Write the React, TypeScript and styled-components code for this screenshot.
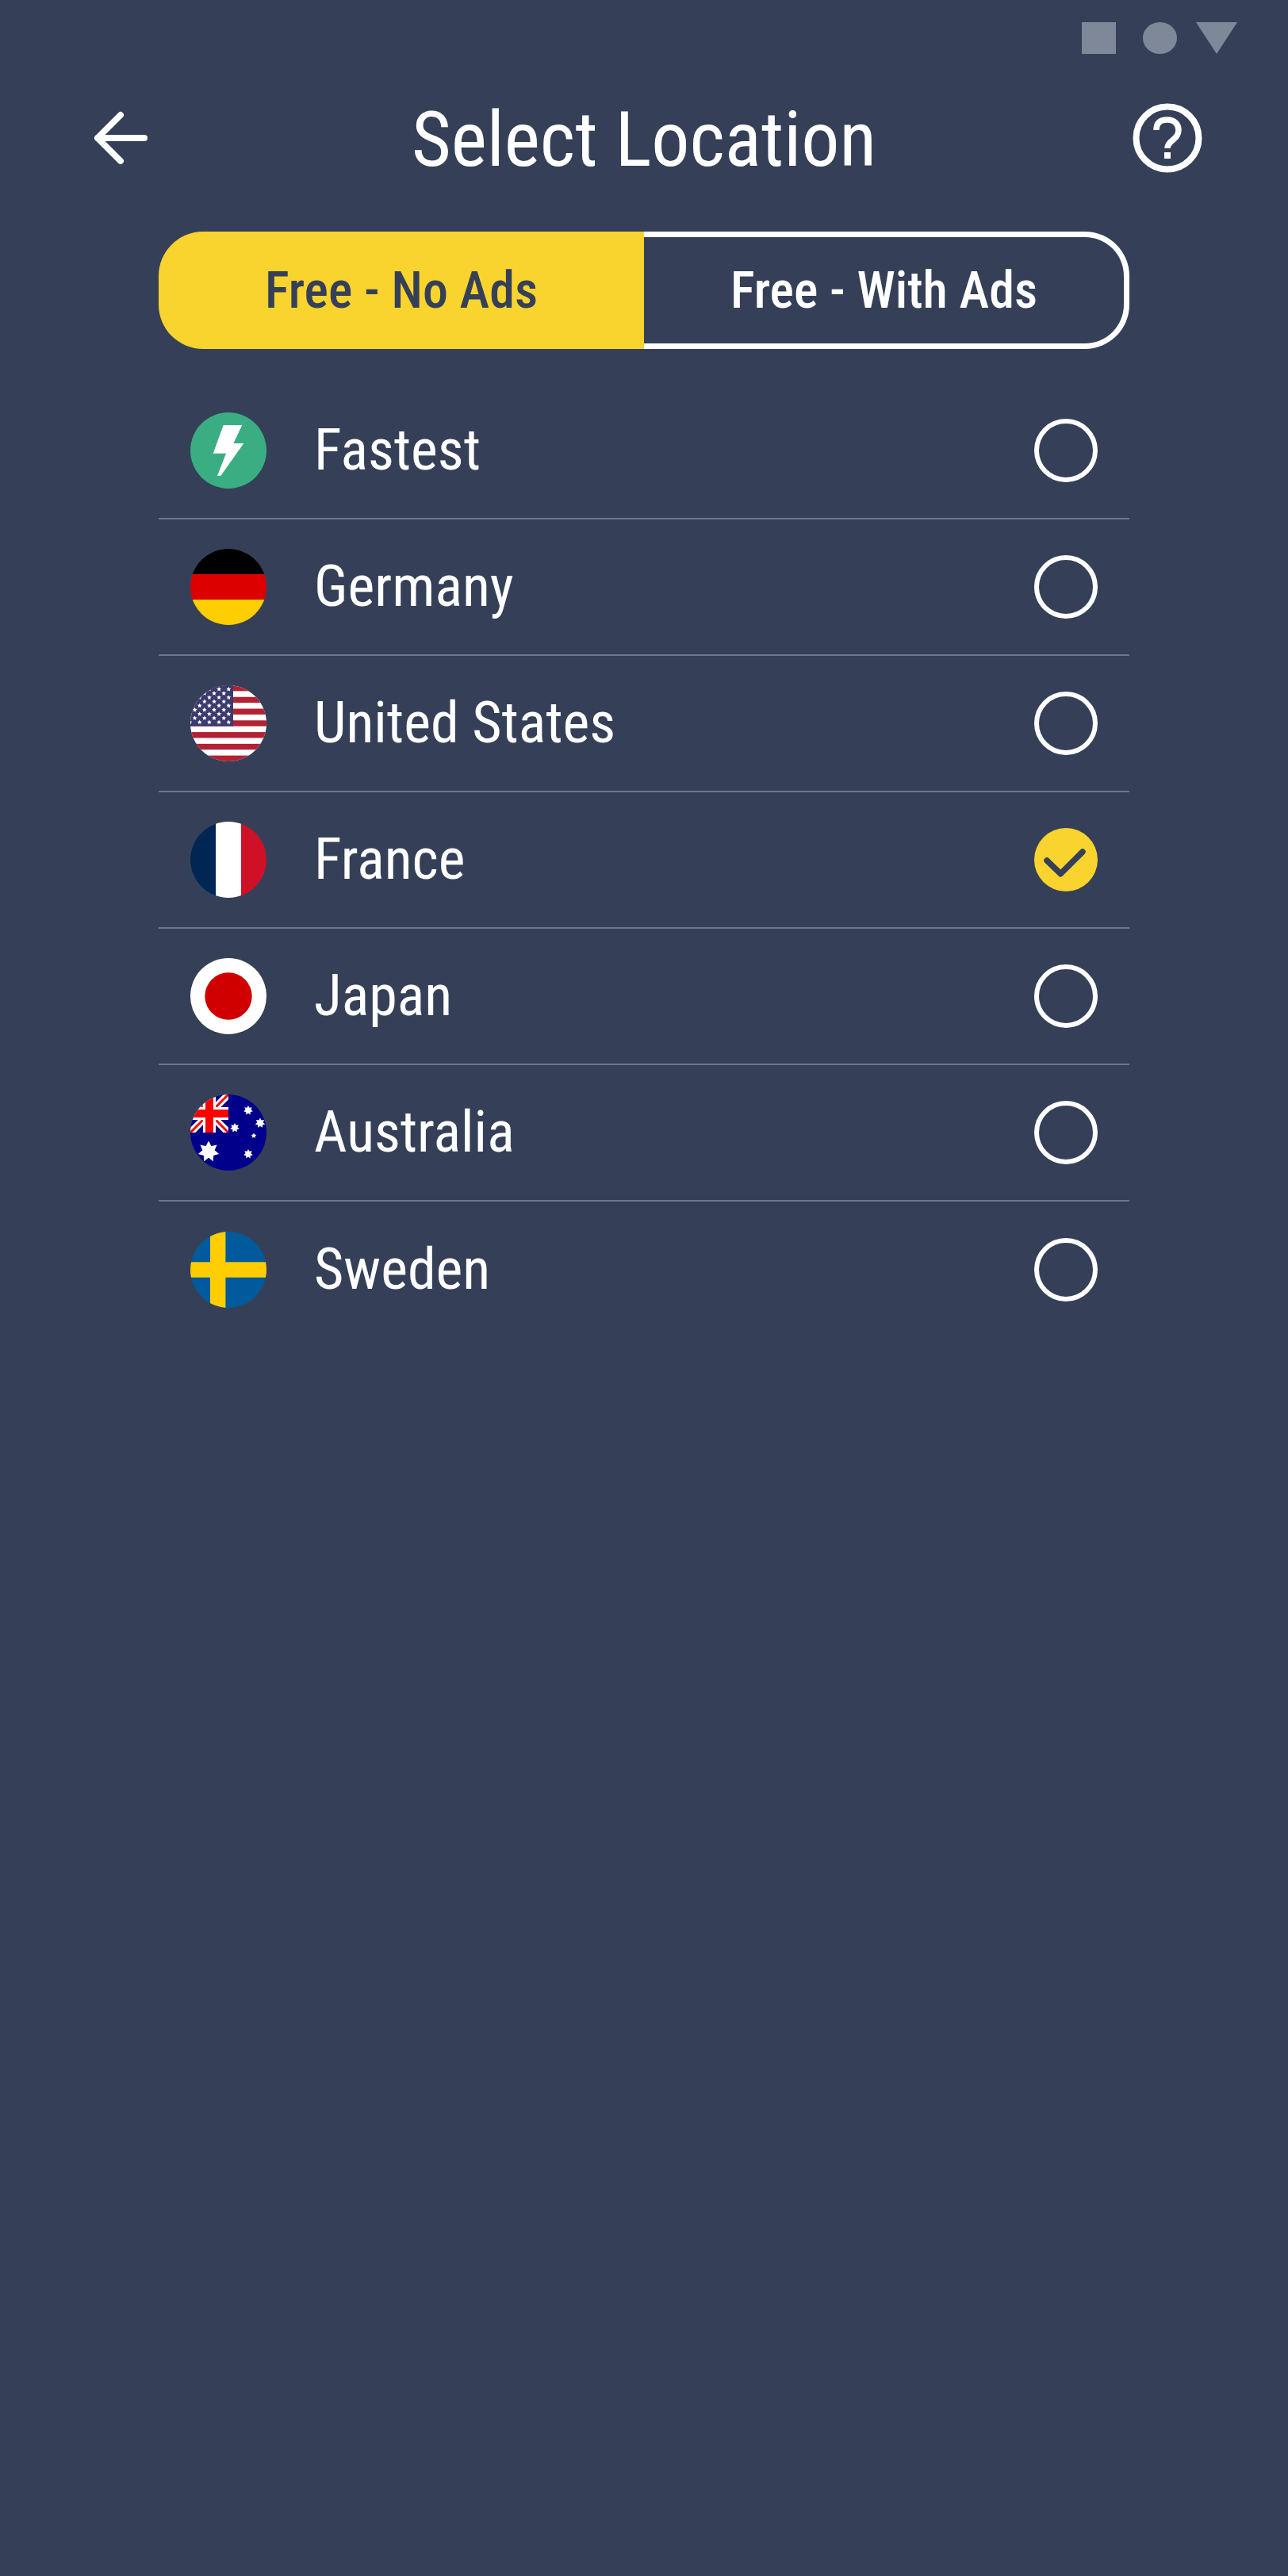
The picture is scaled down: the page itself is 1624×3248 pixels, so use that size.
import React, { useState } from 'react';
import styled, { createGlobalStyle } from 'styled-components';

/* ─── page ─── */
const GlobalStyle = createGlobalStyle`
  html, body { margin: 0; padding: 0; background: #354058; }
  * { box-sizing: border-box; }
`;

const FONT = `'Roboto Condensed', Roboto, sans-serif`;

const Page = styled.div`
  width: 1624px;
  height: 3248px;
  overflow: hidden;
  background: #354058;
  font-family: ${FONT};
  font-stretch: 75%;
  display: flex;
  flex-direction: column;
`;

/* ─── android nav shapes ─── */
const StatusBar = styled.div`
  display: flex;
  justify-content: flex-end;
  padding: 28px 64px 0 0;
  height: 68px;
`;

/* ─── header ─── */
const Header = styled.header`
  display: grid;
  grid-template-columns: 1fr auto 1fr;
  align-items: center;
  height: 88px;
  margin-top: 60px;
`;

const BackButton = styled.button`
  justify-self: start;
  margin-left: 116px;
  padding: 0;
  border: none;
  background: none;
  display: flex;
`;

const HelpButton = styled.button`
  justify-self: end;
  margin-right: 108px;
  padding: 0;
  border: none;
  background: none;
  display: flex;
`;

const Title = styled.h1`
  margin: 0;
  padding-top: 4px;
  font-size: 96px;
  font-weight: 400;
  line-height: 88px;
  color: #fff;
`;

/* ─── free tier switch ─── */
const Segmented = styled.div`
  display: grid;
  grid-template-columns: 1fr 1fr;
  width: 1224px;
  height: 148px;
  margin: 76px 0 0 200px;
`;

const Segment = styled.button<{ $active: boolean }>`
  font-family: ${FONT};
  font-stretch: 75%;
  font-size: 64px;
  font-weight: 500;
  padding: 0;
  color: ${p => (p.$active ? '#354058' : '#fff')};
  background: ${p => (p.$active ? '#f9d32e' : 'transparent')};
  border: ${p => (p.$active ? 'none' : '7px solid #fff')};
  border-left: none;
  border-radius: ${p => (p.$active ? '56px 0 0 56px' : '0 56px 56px 0')};
`;

/* ─── location list ─── */
const List = styled.ul`
  list-style: none;
  width: 1224px;
  margin: 43px 0 0 200px;
  padding: 0;
`;

const Row = styled.li`
  display: flex;
  align-items: center;
  height: 172px;
  padding: 0 40px;
  border-bottom: 2px solid #6d7590;
  &:last-child { border-bottom: none; }
`;

const FlagSlot = styled.span`
  display: flex;
  width: 96px;
  height: 96px;
  flex: none;
`;

const Name = styled.span`
  flex: 1;
  margin-left: 60px;
  padding-bottom: 2px;
  font-size: 72px;
  color: #fff;
`;

const Radio = styled.span<{ $checked: boolean }>`
  display: flex;
  align-items: center;
  justify-content: center;
  width: 80px;
  height: 80px;
  border-radius: 50%;
  background: ${p => (p.$checked ? '#f9d32e' : 'transparent')};
  border: ${p => (p.$checked ? 'none' : '6px solid #fff')};
`;

/* ─── flags ─── */
const star = (cx: number, cy: number, r: number, points = 5) => {
  const inner = points === 7 ? r * 0.58 : r * 0.5;
  const out: string[] = [];
  for (let i = 0; i < points * 2; i++) {
    const rad = i % 2 ? inner : r;
    const a = -Math.PI / 2 + (i * Math.PI) / points;
    out.push(`${(cx + rad * Math.cos(a)).toFixed(2)},${(cy + rad * Math.sin(a)).toFixed(2)}`);
  }
  return out.join(' ');
};

const Disc: React.FC<{ id: string; children: React.ReactNode }> = ({ id, children }) => (
  <svg width="96" height="96" viewBox="0 0 96 96">
    <defs>
      <clipPath id={id}>
        <circle cx="48" cy="48" r="48" />
      </clipPath>
    </defs>
    <g clipPath={`url(#${id})`}>{children}</g>
  </svg>
);

const Fastest = () => (
  <Disc id="clip-fast">
    <rect width="96" height="96" fill="#3aae82" />
    <polygon points="41.7,16 65.3,16 54.3,39 67.3,39 38.3,80 34,80 45,51.7 28.7,51.7" fill="#fff" />
  </Disc>
);

const Germany = () => (
  <Disc id="clip-de">
    <rect width="96" height="32" fill="#000" />
    <rect y="32" width="96" height="32" fill="#dd0000" />
    <rect y="64" width="96" height="32" fill="#ffce00" />
  </Disc>
);

const UnitedStates = () => {
  const stars: string[] = [];
  for (let row = 0; row < 9; row++) {
    const startX = row % 2 ? 42.2 : 48.3;
    const y = 5 + row * 5.2;
    for (let k = 0; k < 5; k++) stars.push(star(startX - k * 12.2, y, 3));
  }
  return (
    <Disc id="clip-us">
      <rect width="96" height="96" fill="#fff" />
      {[0, 2, 4, 6, 8, 10, 12].map(i => (
        <rect key={i} y={i * 7.385} width="96" height="7.385" fill="#b22234" />
      ))}
      <rect width="54" height="51.7" fill="#3c3b6e" />
      {stars.map(s => (
        <polygon key={s} points={s} fill="#fff" />
      ))}
    </Disc>
  );
};

const France = () => (
  <Disc id="clip-fr">
    <rect width="32" height="96" fill="#002654" />
    <rect x="32" width="32" height="96" fill="#fff" />
    <rect x="64" width="32" height="96" fill="#ce1126" />
  </Disc>
);

const Japan = () => (
  <Disc id="clip-jp">
    <rect width="96" height="96" fill="#fff" />
    <circle cx="48" cy="48" r="29.7" fill="#d00000" />
  </Disc>
);

const Australia = () => (
  <Disc id="clip-au">
    <rect width="96" height="96" fill="#00008b" />
    <svg width="48" height="48" viewBox="0 0 48 48">
      <path d="M0 0 L48 48 M48 0 L0 48" stroke="#fff" strokeWidth="9" />
      <path d="M0 0 L48 48 M48 0 L0 48" stroke="#f00" strokeWidth="3" />
      <path d="M24 0 V48 M0 24 H48" stroke="#fff" strokeWidth="16" />
      <path d="M24 0 V48 M0 24 H48" stroke="#f00" strokeWidth="10" />
    </svg>
    <polygon points={star(23, 72, 13.5, 7)} fill="#fff" />
    <polygon points={star(73, 20, 6, 7)} fill="#fff" />
    <polygon points={star(88, 36, 6.5, 7)} fill="#fff" />
    <polygon points={star(56, 42, 6, 7)} fill="#fff" />
    <polygon points={star(80, 52, 3.5, 5)} fill="#fff" />
    <polygon points={star(73, 75, 6, 7)} fill="#fff" />
  </Disc>
);

const Sweden = () => (
  <Disc id="clip-se">
    <rect width="96" height="96" fill="#005a9c" />
    <rect x="25" width="19.4" height="96" fill="#ffcd00" />
    <rect y="38.3" width="96" height="19.4" fill="#ffcd00" />
  </Disc>
);

const LOCATIONS = [
  { name: 'Fastest', Flag: Fastest },
  { name: 'Germany', Flag: Germany },
  { name: 'United States', Flag: UnitedStates },
  { name: 'France', Flag: France },
  { name: 'Japan', Flag: Japan },
  { name: 'Australia', Flag: Australia },
  { name: 'Sweden', Flag: Sweden },
];

export default function App() {
  const [tier, setTier] = useState<'no-ads' | 'ads'>('no-ads');
  const [selected, setSelected] = useState('France');

  return (
    <Page>
      <GlobalStyle />
      <StatusBar>
        <svg width="196" height="40" viewBox="0 0 196 40" fill="#7e8898">
          <rect width="43" height="40" />
          <ellipse cx="98.5" cy="20" rx="21.5" ry="20" />
          <polygon points="144,0 196,0 170,40" />
        </svg>
      </StatusBar>

      <Header>
        <BackButton aria-label="Back">
          <svg width="72" height="72" viewBox="0 0 72 72" fill="none" stroke="#fff" strokeWidth="8" strokeLinecap="round" strokeLinejoin="round">
            <path d="M36 7 L7 36 L36 65 M7 36 H66" />
          </svg>
        </BackButton>
        <Title>Select Location</Title>
        <HelpButton aria-label="Help">
          <svg width="88" height="88" viewBox="0 0 88 88" fill="none" stroke="#fff">
            <circle cx="44" cy="44" r="39.5" strokeWidth="8" />
            <path d="M30 34 C30 24 36 21 44 21 C53 21 58 27 58 34 C58 42 52 45 48 49 C45 52 44 54 44 57" strokeWidth="7.5" />
            <rect x="40" y="62" width="8" height="8" fill="#fff" stroke="none" />
          </svg>
        </HelpButton>
      </Header>

      <Segmented>
        <Segment $active={tier === 'no-ads'} onClick={() => setTier('no-ads')}>Free - No Ads</Segment>
        <Segment $active={tier === 'ads'} onClick={() => setTier('ads')}>Free - With Ads</Segment>
      </Segmented>

      <List>
        {LOCATIONS.map(({ name, Flag }) => (
          <Row key={name} onClick={() => setSelected(name)}>
            <FlagSlot><Flag /></FlagSlot>
            <Name>{name}</Name>
            <Radio $checked={selected === name}>
              {selected === name && (
                <svg width="80" height="80" viewBox="0 0 80 80" fill="none" stroke="#354058" strokeWidth="7.5" strokeLinecap="round" strokeLinejoin="round">
                  <path d="M16 41 L33.3 57.7 L61 30" />
                </svg>
              )}
            </Radio>
          </Row>
        ))}
      </List>
    </Page>
  );
}
